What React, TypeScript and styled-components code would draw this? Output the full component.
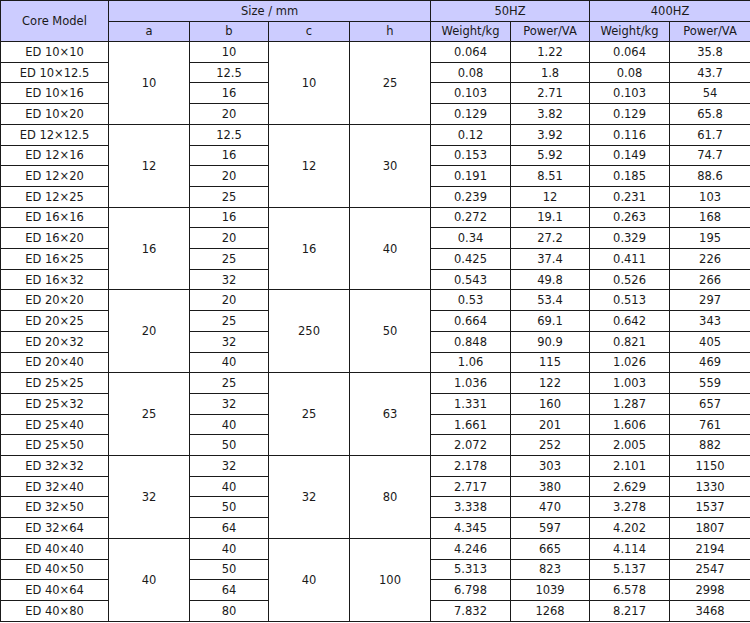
import styled, { createGlobalStyle } from 'styled-components';

const GlobalStyle = createGlobalStyle`
  html, body {
    margin: 0;
    padding: 0;
    background: #fff;
  }
`;

const Table = styled.table`
  width: 750px;
  border-collapse: collapse;
  table-layout: fixed;
  font-family: 'DejaVu Sans', Verdana, sans-serif;
  font-size: 11.5px;
  color: #1a1a1a;
`;

const HeadRow = styled.tr`
  height: 20.5px;
`;

const Row = styled.tr`
  height: 20.71px;
`;

const Th = styled.th`
  background: #ccccff;
  border: 1px solid #1a1a1a;
  font-weight: 400;
  text-align: center;
  padding: 0;
  line-height: 18px;
`;

const Td = styled.td<{ $soft?: boolean }>`
  border: 1px solid ${({ $soft }) => ($soft ? '#777' : '#1a1a1a')};
  text-align: center;
  padding: 0;
  line-height: 18px;
  white-space: nowrap;
`;

type Group = {
  a: number;
  c: number;
  h: number;
  b: string[];
  w50: string[];
  p50: string[];
  w400: string[];
  p400: string[];
};

const groups: Group[] = [
  { a: 10, c: 10, h: 25, b: ['10', '12.5', '16', '20'], w50: ['0.064', '0.08', '0.103', '0.129'], p50: ['1.22', '1.8', '2.71', '3.82'], w400: ['0.064', '0.08', '0.103', '0.129'], p400: ['35.8', '43.7', '54', '65.8'] },
  { a: 12, c: 12, h: 30, b: ['12.5', '16', '20', '25'], w50: ['0.12', '0.153', '0.191', '0.239'], p50: ['3.92', '5.92', '8.51', '12'], w400: ['0.116', '0.149', '0.185', '0.231'], p400: ['61.7', '74.7', '88.6', '103'] },
  { a: 16, c: 16, h: 40, b: ['16', '20', '25', '32'], w50: ['0.272', '0.34', '0.425', '0.543'], p50: ['19.1', '27.2', '37.4', '49.8'], w400: ['0.263', '0.329', '0.411', '0.526'], p400: ['168', '195', '226', '266'] },
  { a: 20, c: 250, h: 50, b: ['20', '25', '32', '40'], w50: ['0.53', '0.664', '0.848', '1.06'], p50: ['53.4', '69.1', '90.9', '115'], w400: ['0.513', '0.642', '0.821', '1.026'], p400: ['297', '343', '405', '469'] },
  { a: 25, c: 25, h: 63, b: ['25', '32', '40', '50'], w50: ['1.036', '1.331', '1.661', '2.072'], p50: ['122', '160', '201', '252'], w400: ['1.003', '1.287', '1.606', '2.005'], p400: ['559', '657', '761', '882'] },
  { a: 32, c: 32, h: 80, b: ['32', '40', '50', '64'], w50: ['2.178', '2.717', '3.338', '4.345'], p50: ['303', '380', '470', '597'], w400: ['2.101', '2.629', '3.278', '4.202'], p400: ['1150', '1330', '1537', '1807'] },
  { a: 40, c: 40, h: 100, b: ['40', '50', '64', '80'], w50: ['4.246', '5.313', '6.798', '7.832'], p50: ['665', '823', '1039', '1268'], w400: ['4.114', '5.137', '6.578', '8.217'], p400: ['2194', '2547', '2998', '3468'] },
];

const widths = [108, 81, 79, 81, 81, 80, 79, 80, 81];

export default function App() {
  return (
    <>
      <GlobalStyle />
      <Table>
        <colgroup>
          {widths.map((w, i) => (
            <col key={i} style={{ width: w }} />
          ))}
        </colgroup>
        <thead>
          <HeadRow>
            <Th rowSpan={2}>Core Model</Th>
            <Th colSpan={4}>Size / mm</Th>
            <Th colSpan={2}>50HZ</Th>
            <Th colSpan={2}>400HZ</Th>
          </HeadRow>
          <HeadRow>
            <Th>a</Th>
            <Th>b</Th>
            <Th>c</Th>
            <Th>h</Th>
            <Th>Weight/kg</Th>
            <Th>Power/VA</Th>
            <Th>Weight/kg</Th>
            <Th>Power/VA</Th>
          </HeadRow>
        </thead>
        <tbody>
          {groups.map((g) =>
            g.b.map((b, i) => (
              <Row key={`${g.a}-${i}`}>
                <Td>{`ED ${g.a}×${b}`}</Td>
                {i === 0 && <Td rowSpan={4}>{g.a}</Td>}
                <Td>{b}</Td>
                {i === 0 && <Td rowSpan={4}>{g.c}</Td>}
                {i === 0 && <Td rowSpan={4}>{g.h}</Td>}
                <Td>{g.w50[i]}</Td>
                <Td>{g.p50[i]}</Td>
                <Td>{g.w400[i]}</Td>
                <Td>{g.p400[i]}</Td>
              </Row>
            ))
          )}
        </tbody>
      </Table>
    </>
  );
}
